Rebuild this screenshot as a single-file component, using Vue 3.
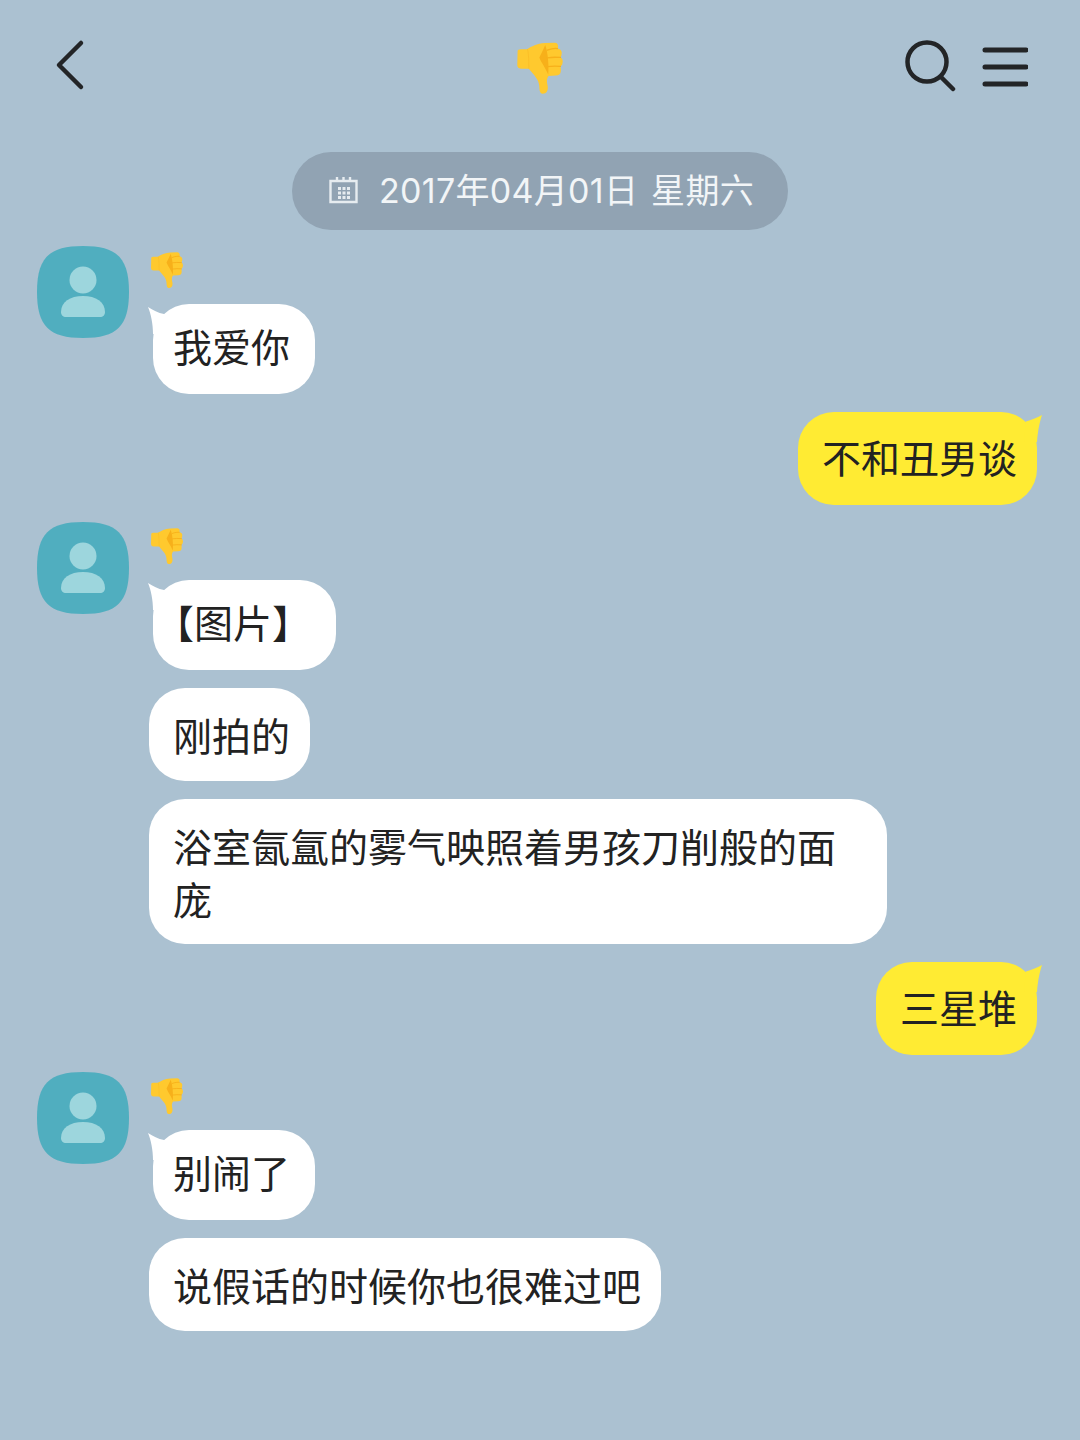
<template>
  <div class="page">
    <svg class="defs" width="0" height="0">
      <symbol id="thumb" viewBox="78 62 144 164">
        <path d="M82 92 Q82 87 92 87 L110 87 C125 78 140 70 165 68 L195 67 Q205 68 205 78 Q205 83 203 85 Q216 87 216 98 Q216 108 212 112 Q219 114 219 125 Q219 135 212 139 Q214 145 213 155 Q212 167 198 167 L176 168 C170 175 170 186 173 197 C176 212 170 222 158 222 C150 222 148 212 148 200 C147 178 132 166 116 146 L92 146 Q82 146 81 136 Z" fill="#ffc92e" />
        <path d="M112 87 C116 100 116 130 116 146" fill="none" stroke="#f9b923" stroke-width="2" />
        <path d="M166 74 C160 88 154 100 148 112 C154 128 166 142 175 164 C177 140 175 100 166 74 Z" fill="#f7b01a" />
        <path d="M172 90 C185 85 195 84 203 85 M172 113 C185 111 200 111 212 112 M172 140 C185 138 200 138 212 139" fill="none" stroke="#f7b01a" stroke-width="4" stroke-linecap="round" />
      </symbol>
    </svg>

    <header class="topbar">
      <svg class="back-icon" width="32" height="54" viewBox="0 0 32 54">
        <path d="M27 5 L5 27 L27 49" />
      </svg>
      <svg class="title-thumb" width="48" height="54"><use href="#thumb" /></svg>
      <div class="top-actions">
        <svg class="search-icon" width="52" height="54" viewBox="0 0 52 54">
          <circle cx="23" cy="22" r="19.5" />
          <path d="M37 37 L49 49" />
        </svg>
        <svg class="menu-icon" width="46" height="44" viewBox="0 0 46 44">
          <path d="M3 5 H44 M3 22 H44 M3 39 H44" />
        </svg>
      </div>
    </header>

    <div class="date-row">
      <div class="date-pill">
        <svg width="30" height="30" viewBox="0 0 30 30" class="cal-icon">
          <path class="cal-line" d="M1.5 5 H27.5 V26 H1.5 Z M8 1 V5 M14.5 1 V5 M21 1 V5" />
          <g fill="#e6ecf0">
            <rect v-for="d in calDots" :key="d.x + '-' + d.y" :x="d.x" :y="d.y" width="3" height="3" />
          </g>
        </svg>
        <span class="date-text">2017年04月01日 星期六</span>
      </div>
    </div>

    <div class="messages">
      <template v-for="(group, i) in groups" :key="i">
        <div v-if="group.mine" class="row-mine">
          <div class="bubble mine">
            {{ group.text }}
            <svg class="tail tail-right" width="20" height="30" viewBox="0 0 20 30">
              <path d="M4 9.5 C9 8 15 6 20 3 C18 9 16 17 15 30 L2 30 Z" fill="#ffeb33" />
            </svg>
          </div>
        </div>
        <div v-else class="row-other">
          <svg class="avatar" width="92" height="92" viewBox="0 0 92 92">
            <path d="M46 0 C80 0 92 12 92 46 C92 80 80 92 46 92 C12 92 0 80 0 46 C0 12 12 0 46 0 Z" fill="#50aebf" />
            <circle cx="46" cy="34" r="13.5" fill="#9dd6dd" />
            <path d="M24 66 C24 56 33 50 46 50 C59 50 68 56 68 66 C68 69 66 71 63 71 H29 C26 71 24 69 24 66 Z" fill="#9dd6dd" />
          </svg>
          <div class="col">
            <svg class="name-thumb" width="36" height="40"><use href="#thumb" /></svg>
            <div
              v-for="(m, j) in group.list"
              :key="j"
              class="bubble"
              :class="{ first: j === 0, bracket: m.startsWith('【'), long: m.length > 17 }"
            >
              {{ m }}
              <svg v-if="j === 0" class="tail tail-left" width="20" height="30" viewBox="0 0 20 30">
                <path d="M0 3 C5 6 10 9 16 10 L18 30 L5 30 C5 20 3 10 0 3 Z" fill="#fff" />
              </svg>
            </div>
          </div>
        </div>
      </template>
    </div>
  </div>
</template>

<script setup>
const calDots = []
for (const y of [11, 15.5, 20]) {
  for (const x of [9, 13.5, 18]) {
    calDots.push({ x, y })
  }
}

const groups = [
  { list: ['我爱你'] },
  { mine: true, text: '不和丑男谈' },
  { list: ['【图片】', '刚拍的', '浴室氤氲的雾气映照着男孩刀削般的面庞'] },
  { mine: true, text: '三星堆' },
  { list: ['别闹了', '说假话的时候你也很难过吧'] }
]
</script>

<style>
html, body {
  margin: 0;
  background: #abc1d1;
}
</style>

<style scoped>
.page {
  width: 1080px;
  height: 1440px;
  background: #abc1d1;
  font-family: "Noto Sans CJK SC", "Liberation Sans", sans-serif;
  color: #222;
  overflow: hidden;
}
.defs {
  display: block;
  height: 0;
}
.topbar {
  height: 152px;
  box-sizing: border-box;
  padding: 38px 52px 0 54px;
  display: grid;
  grid-template-columns: 1fr auto 1fr;
  align-items: start;
}
.back-icon path,
.search-icon circle,
.search-icon path,
.menu-icon path {
  fill: none;
  stroke: #232527;
  stroke-width: 4.5;
  stroke-linecap: round;
  stroke-linejoin: round;
}
.menu-icon path {
  stroke-width: 5;
}
.title-thumb {
  margin: 3px 0 0 -2px;
}
.top-actions {
  display: flex;
  justify-content: flex-end;
  gap: 26px;
  padding-top: 2px;
}
.menu-icon {
  margin-top: 5px;
}
.date-row {
  display: flex;
  justify-content: center;
}
.date-pill {
  height: 78px;
  width: 496px;
  box-sizing: border-box;
  padding: 0 0 0 37px;
  border-radius: 39px;
  background: #91a3b3;
  display: flex;
  align-items: center;
  gap: 20px;
  color: #f2f5f7;
}
.cal-icon {
  flex: none;
}
.cal-line {
  fill: none;
  stroke: #e6ecf0;
  stroke-width: 2.4;
}
.date-text {
  font-family: Inter, "Noto Sans CJK SC", sans-serif;
  font-size: 34px;
  line-height: 78px;
  letter-spacing: 0.3px;
  word-spacing: 3px;
  white-space: pre;
}
.messages {
  padding: 16px 43px 0 37px;
}
.row-other {
  display: flex;
  gap: 20px;
  margin-bottom: 18px;
}
.avatar {
  flex: none;
}
.col {
  display: flex;
  flex-direction: column;
  align-items: flex-start;
  gap: 18px;
  min-width: 0;
}
.name-thumb {
  display: block;
  width: 34px;
  height: 38px;
  margin: 5px 0 -3px 1px;
}
.row-mine {
  display: flex;
  justify-content: flex-end;
  margin-bottom: 17px;
}
.bubble {
  position: relative;
  box-sizing: border-box;
  max-width: 738px;
  padding: 20px 20px 20px 24px;
  border-radius: 36px;
  background: #fff;
  font-size: 39px;
  line-height: 53px;
}
.bubble.long {
  padding: 20px 20px 19px 24px;
}
.bubble.first {
  margin-left: 4px;
  padding: 14.5px 25px 22.5px 20px;
}
.bubble.first.bracket {
  text-indent: -18px;
}
.bubble.mine {
  background: #ffeb33;
  padding: 18px 20px 22px 24px;
}
.tail {
  position: absolute;
  top: 0;
}
.tail-left {
  left: -5px;
}
.tail-right {
  right: -5px;
}
</style>
